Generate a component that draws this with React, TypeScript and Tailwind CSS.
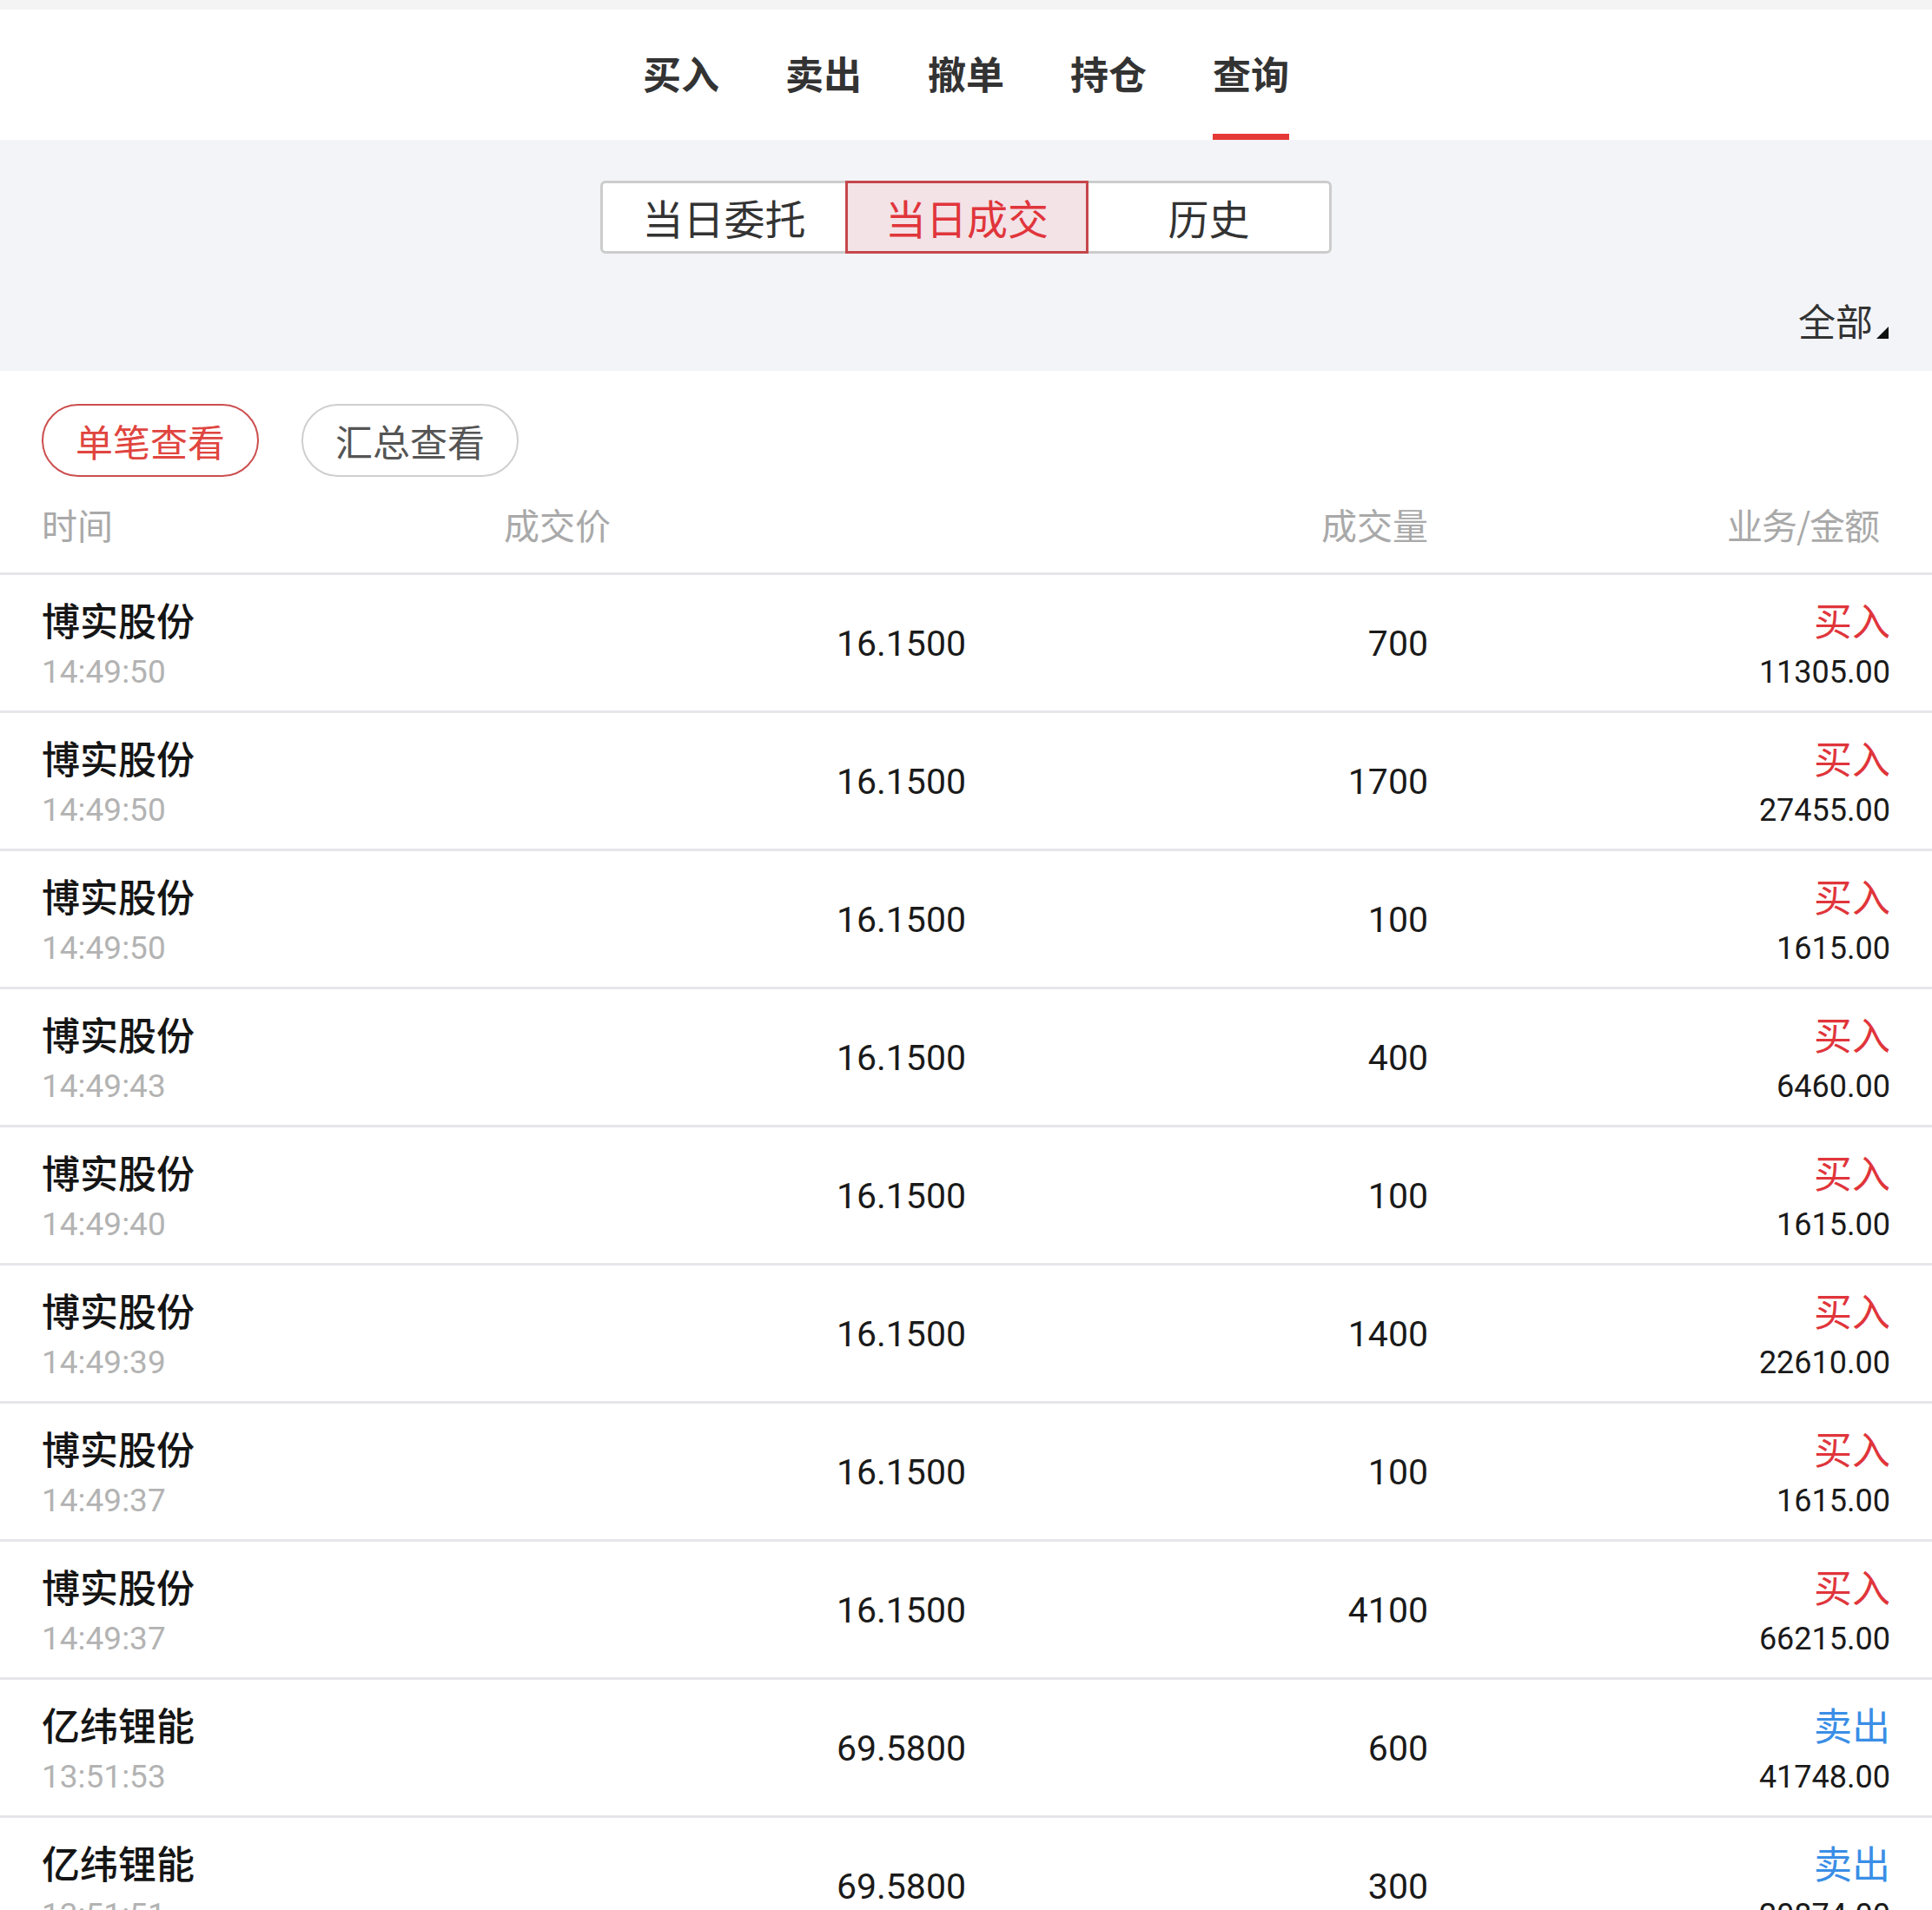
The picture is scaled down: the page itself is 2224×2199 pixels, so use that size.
import React from 'react'

const cjk = { fontFamily: '"Noto Sans CJK SC", "Noto Sans", sans-serif' }
const num = { fontFamily: 'Roboto, "Noto Sans", sans-serif' }

type Trade = {
  name: string
  time: string
  price: string
  qty: string
  side: 'buy' | 'sell'
  amount: string
}

const trades: Trade[] = [
  { name: '博实股份', time: '14:49:50', price: '16.1500', qty: '700', side: 'buy', amount: '11305.00' },
  { name: '博实股份', time: '14:49:50', price: '16.1500', qty: '1700', side: 'buy', amount: '27455.00' },
  { name: '博实股份', time: '14:49:50', price: '16.1500', qty: '100', side: 'buy', amount: '1615.00' },
  { name: '博实股份', time: '14:49:43', price: '16.1500', qty: '400', side: 'buy', amount: '6460.00' },
  { name: '博实股份', time: '14:49:40', price: '16.1500', qty: '100', side: 'buy', amount: '1615.00' },
  { name: '博实股份', time: '14:49:39', price: '16.1500', qty: '1400', side: 'buy', amount: '22610.00' },
  { name: '博实股份', time: '14:49:37', price: '16.1500', qty: '100', side: 'buy', amount: '1615.00' },
  { name: '博实股份', time: '14:49:37', price: '16.1500', qty: '4100', side: 'buy', amount: '66215.00' },
  { name: '亿纬锂能', time: '13:51:53', price: '69.5800', qty: '600', side: 'sell', amount: '41748.00' },
  { name: '亿纬锂能', time: '13:51:51', price: '69.5800', qty: '300', side: 'sell', amount: '20874.00' },
]

const tabs = ['买入', '卖出', '撤单', '持仓', '查询']

function TopTabs() {
  return (
    <div className="flex h-[150px] items-stretch justify-center gap-[76px] bg-white">
      {tabs.map((t, i) => (
        <div key={t} className="relative flex flex-col items-center">
          <span
            style={cjk}
            className="mt-[46px] text-[44px] leading-[54px] font-bold text-[#333333]"
          >
            {t}
          </span>
          {i === tabs.length - 1 && (
            <span className="absolute bottom-0 left-0 h-[7px] w-full bg-[#e53935]" />
          )}
        </div>
      ))}
    </div>
  )
}

function Segments() {
  return (
    <div className="flex h-[266px] flex-col bg-[#f3f4f8]">
      <div className="mt-[47px] flex justify-center">
        <div className="flex h-[84px] w-[842px] rounded-[6px] border-[3px] border-[#cccccc] bg-white">
          <div
            style={cjk}
            className="flex w-[279px] items-center justify-center text-[47px] text-[#333333]"
          >
            当日委托
          </div>
          <div
            style={cjk}
            className="-my-[3px] flex w-[280px] items-center justify-center border-[3px] border-[#c5474b] bg-[#f3e2e6] text-[47px] text-[#e0353b]"
          >
            当日成交
          </div>
          <div
            style={cjk}
            className="flex flex-1 items-center justify-center text-[47px] text-[#333333]"
          >
            历史
          </div>
        </div>
      </div>
      <div className="mt-[50px] flex justify-end pr-[50px]">
        <div className="flex items-end">
          <span style={cjk} className="text-[43px] leading-[52px] text-[#333333]">
            全部
          </span>
          <svg width="14" height="14" viewBox="0 0 14 14" className="mb-[4px] ml-[4px]">
            <polygon points="14,0 14,14 0,14" fill="#111111" />
          </svg>
        </div>
      </div>
    </div>
  )
}

function Pills() {
  return (
    <div className="flex gap-[49px] pl-[48px] pt-[38px]">
      <div
        style={cjk}
        className="flex h-[84px] w-[250px] items-center justify-center rounded-full border-[2px] border-[#cc4f4f] text-[43px] text-[#e0453f]"
      >
        单笔查看
      </div>
      <div
        style={cjk}
        className="flex h-[84px] w-[250px] items-center justify-center rounded-full border-[2px] border-[#cfcfcf] text-[43px] text-[#555555]"
      >
        汇总查看
      </div>
    </div>
  )
}

function HeaderRow() {
  return (
    <div
      style={cjk}
      className="grid h-[113px] grid-cols-[532px_532px_532px_532px] items-center border-b-[3px] border-[#e6e6ea] px-[48px] text-[41px] text-[#a9a9a9]"
    >
      <div>时间</div>
      <div>成交价</div>
      <div className="text-right">成交量</div>
      <div className="pr-[13px] text-right tracking-[-1px]">业务/金额</div>
    </div>
  )
}

function Row({ t }: { t: Trade }) {
  return (
    <div className="grid h-[159px] grid-cols-[532px_532px_532px_532px] border-b-[3px] border-[#e6e6ea] px-[48px]">
      <div className="flex flex-col pt-[25px]">
        <span style={cjk} className="text-[44px] leading-[52px] font-medium text-[#151515]">
          {t.name}
        </span>
        <span style={num} className="mt-[13px] text-[37px] leading-[44px] text-[#b3b3b3]">
          {t.time}
        </span>
      </div>
      <div
        style={num}
        className="flex items-center justify-end pt-[4px] text-[41px] text-[#1a1a1a]"
      >
        {t.price}
      </div>
      <div
        style={num}
        className="flex items-center justify-end pt-[4px] text-[41px] text-[#1a1a1a]"
      >
        {t.qty}
      </div>
      <div className="flex flex-col items-end pt-[25px]">
        <span
          style={cjk}
          className={`text-[44px] leading-[52px] ${t.side === 'buy' ? 'text-[#e0353b]' : 'text-[#3a8ee6]'}`}
        >
          {t.side === 'buy' ? '买入' : '卖出'}
        </span>
        <span style={num} className="mt-[13px] text-[36px] leading-[44px] text-[#1a1a1a]">
          {t.amount}
        </span>
      </div>
    </div>
  )
}

export default function App() {
  return (
    <div className="h-[2199px] w-[2224px] overflow-hidden bg-white">
      <div className="h-[11px] bg-[#f4f4f4]" />
      <TopTabs />
      <Segments />
      <Pills />
      <HeaderRow />
      {trades.map((t, i) => (
        <Row key={i} t={t} />
      ))}
    </div>
  )
}
